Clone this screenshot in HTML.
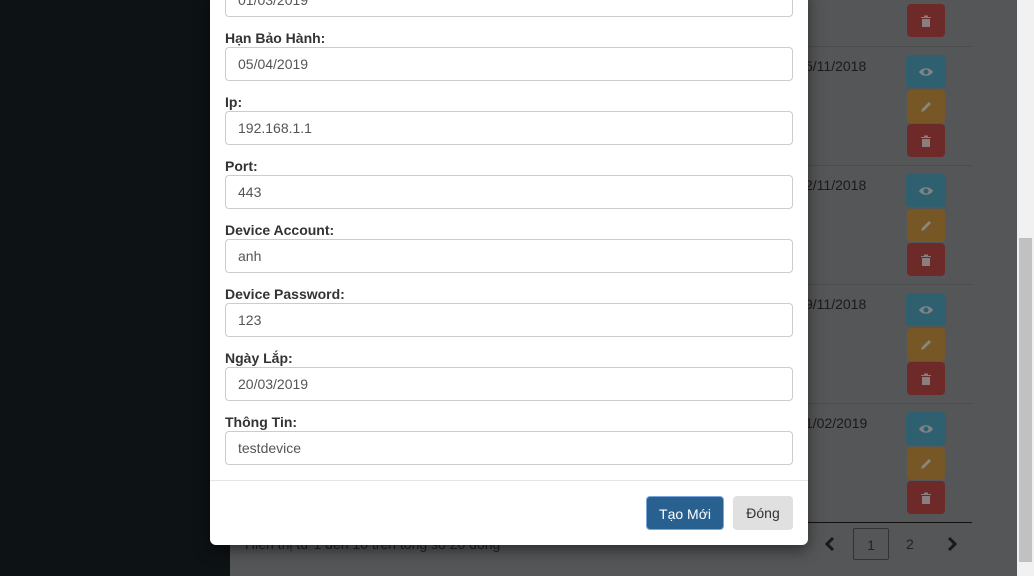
<!DOCTYPE html>
<html><head><meta charset="utf-8"><style>
*{box-sizing:border-box;margin:0;padding:0}
body{width:1034px;height:576px;overflow:hidden;position:relative;font-family:"Liberation Sans","Noto Sans CJK SC",sans-serif;background:#545658}
.side{position:absolute;left:0;top:0;width:230px;height:576px;background:#0d1214}
.sb{position:absolute;left:1017px;top:0;width:17px;height:576px;background:#f1f1f1}
.thumb{position:absolute;left:2px;top:238px;width:13px;height:324px;background:#c1c1c1}
.row{position:absolute;left:230px;width:742px;border-top:1px solid #4a4c4e}
.date{position:absolute;left:805px;font-size:14px;color:#1a1a1a}
.b{position:absolute;left:906px;width:40px;height:33px;border-radius:4px;display:flex;align-items:center;justify-content:center}
.e{background:#2e606f}.p{background:#785727;left:907px;width:38px}.t{background:#6d2a28;left:907px;width:38px}
.modal{position:absolute;left:210px;top:-10px;width:598px;height:555px;background:#fff;border-radius:0 0 6px 6px;box-shadow:0 5px 15px rgba(0,0,0,.5)}
.lab{position:absolute;left:15px;font-size:14px;font-weight:bold;color:#333}
.inp{position:absolute;left:15px;width:568px;height:34px;border:1px solid #ccc;border-radius:4px;font-size:14px;color:#555;padding:8px 12px;line-height:16px}
.foot{position:absolute;left:0;top:490px;width:598px;border-top:1px solid #e5e5e5}
.btn{position:absolute;height:34px;border-radius:4px;font-size:14px;line-height:34px;text-align:center}
</style></head><body>
<svg width="0" height="0" style="position:absolute"><defs>
<g id="eye"><path d="M1 6C4 1 12 1 15 6C12 11 4 11 1 6Z" fill="#7f8386"/><circle cx="8" cy="6" r="2.5" fill="#2e606f"/></g>
<g id="pen"><path d="M2 12L3 9L10 2L12 4L5 11Z" fill="#8a8780"/></g>
<g id="tr"><path d="M2 3H12V4H2ZM5 1.5H9V3H5ZM3 5H11V13H3Z" fill="#8a7f7e"/></g>
</defs></svg>
<div class="side"></div>
<div class="row" style="top:46px"></div><div class="row" style="top:165px"></div><div class="row" style="top:284px"></div><div class="row" style="top:403px"></div>
<div class="row" style="top:522px;border-top-color:#111"></div>
<div class="date" style="top:58px">5/11/2018</div><div class="date" style="top:177px">2/11/2018</div><div class="date" style="top:296px">9/11/2018</div><div class="date" style="top:415px">1/02/2019</div>
<div class="b t" style="top:4px"><svg width="14" height="14"><use href="#tr"/></svg></div>
<div class="b e" style="top:55px"><svg width="16" height="12"><use href="#eye"/></svg></div><div class="b p" style="top:90px"><svg width="14" height="14"><use href="#pen"/></svg></div><div class="b t" style="top:124px"><svg width="14" height="14"><use href="#tr"/></svg></div>
<div class="b e" style="top:174px"><svg width="16" height="12"><use href="#eye"/></svg></div><div class="b p" style="top:209px"><svg width="14" height="14"><use href="#pen"/></svg></div><div class="b t" style="top:243px"><svg width="14" height="14"><use href="#tr"/></svg></div>
<div class="b e" style="top:293px"><svg width="16" height="12"><use href="#eye"/></svg></div><div class="b p" style="top:328px"><svg width="14" height="14"><use href="#pen"/></svg></div><div class="b t" style="top:362px"><svg width="14" height="14"><use href="#tr"/></svg></div>
<div class="b e" style="top:412px"><svg width="16" height="12"><use href="#eye"/></svg></div><div class="b p" style="top:447px"><svg width="14" height="14"><use href="#pen"/></svg></div><div class="b t" style="top:481px"><svg width="14" height="14"><use href="#tr"/></svg></div>
<svg style="position:absolute;left:825px;top:537px" width="10" height="14"><path d="M8 1L2 7L8 13" stroke="#1a1a1a" stroke-width="3" fill="none"/></svg>
<div style="position:absolute;left:853px;top:528px;width:36px;height:32px;border:1px solid #333;border-radius:2px;font-size:14px;color:#222;text-align:center;line-height:32px">1</div>
<div style="position:absolute;left:906px;top:536px;font-size:14px;color:#222">2</div>
<svg style="position:absolute;left:947px;top:537px" width="10" height="14"><path d="M2 1L8 7L2 13" stroke="#1a1a1a" stroke-width="3" fill="none"/></svg>
<div style="position:absolute;left:245px;top:536px;font-size:14px;color:#222">Hiển thị từ 1 đến 10 trên tổng số 20 dòng</div>
<div class="sb"><div class="thumb"></div></div>
<div class="modal">
<div class="inp" style="top:-7px">01/03/2019</div>
<div class="lab" style="top:40px">Hạn Bảo Hành:</div><div class="inp" style="top:57px">05/04/2019</div>
<div class="lab" style="top:104px">Ip:</div><div class="inp" style="top:121px">192.168.1.1</div>
<div class="lab" style="top:168px">Port:</div><div class="inp" style="top:185px">443</div>
<div class="lab" style="top:232px">Device Account:</div><div class="inp" style="top:249px">anh</div>
<div class="lab" style="top:296px">Device Password:</div><div class="inp" style="top:313px">123</div>
<div class="lab" style="top:360px">Ngày Lắp:</div><div class="inp" style="top:377px">20/03/2019</div>
<div class="lab" style="top:424px">Thông Tin:</div><div class="inp" style="top:441px">testdevice</div>
<div class="foot"></div>
<div class="btn" style="left:436px;top:506px;width:78px;background:#286090;color:#fff;border:1px solid #7aa7e0">Tạo Mới</div>
<div class="btn" style="left:523px;top:506px;width:60px;background:#e0e0e0;color:#333">Đóng</div>
</div>
</body></html>
